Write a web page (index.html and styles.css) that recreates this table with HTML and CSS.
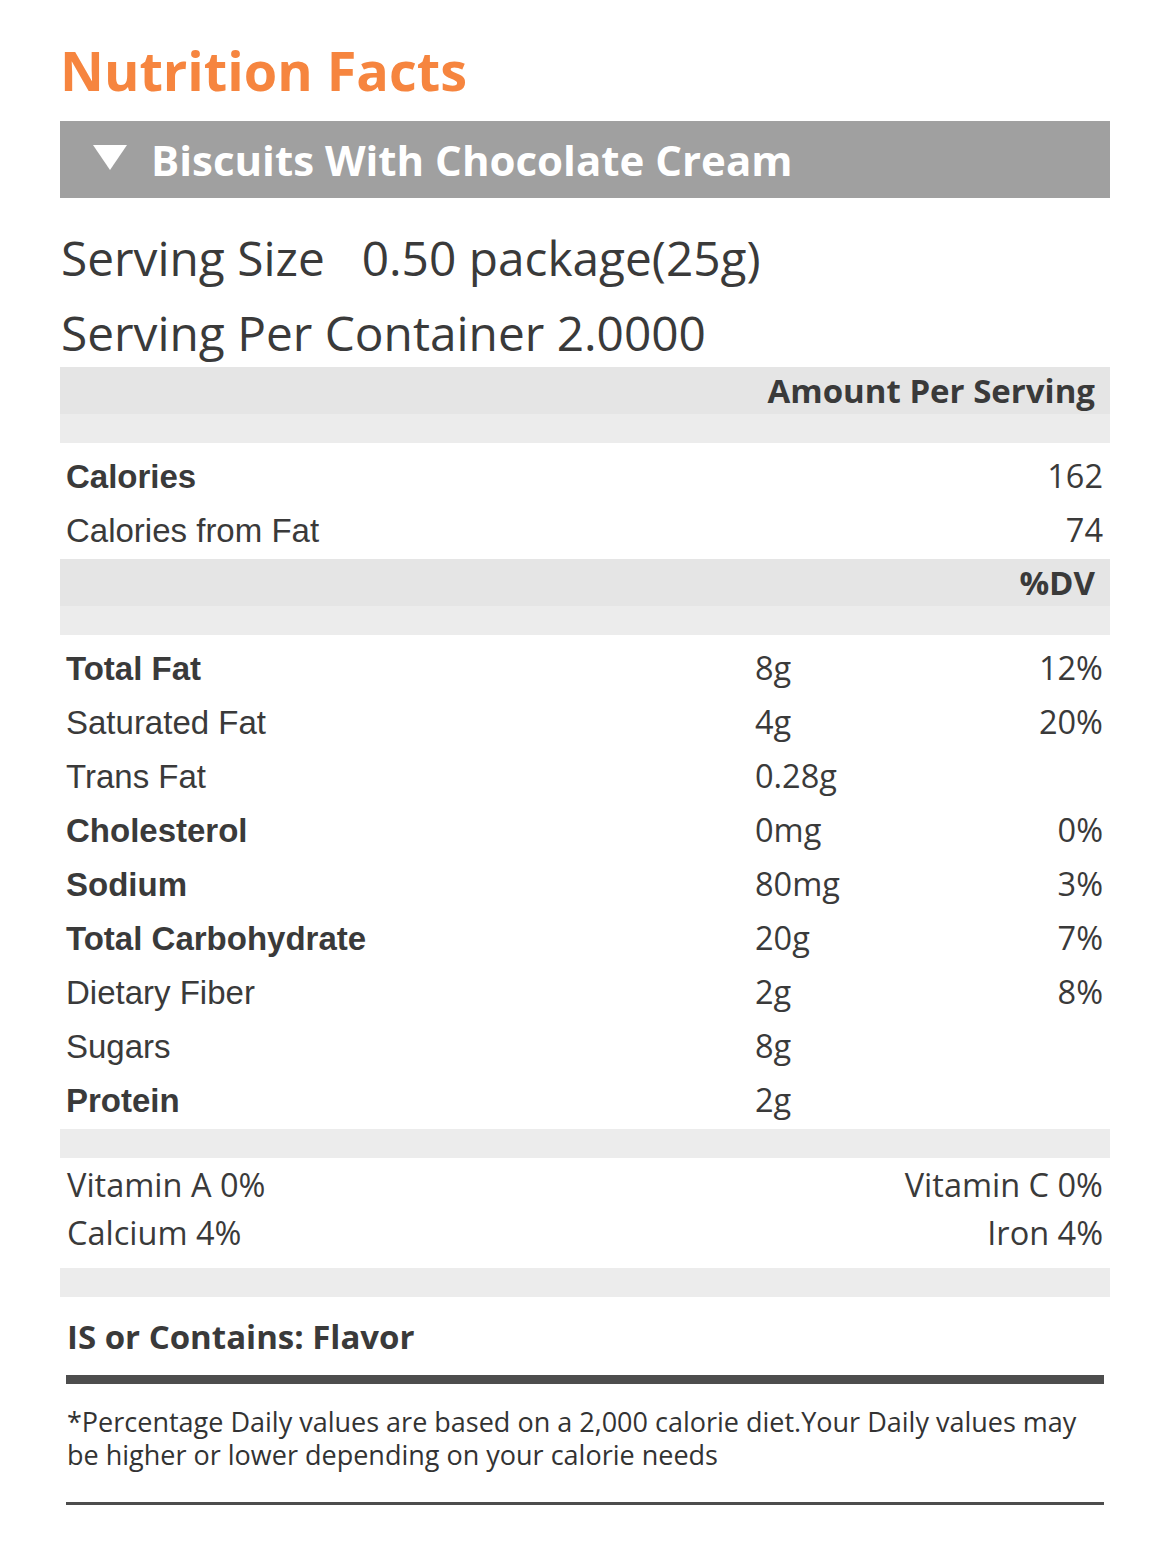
FILE: index.html
```html
<!DOCTYPE html>
<html>
<head>
<meta charset="utf-8">
<link rel="stylesheet" href="styles.css">
</head>
<body>
<div class="page">
  <h1 class="title">Nutrition Facts</h1>
  <div class="product-bar">
    <svg class="caret" width="34" height="25" viewBox="0 0 34 25"><polygon points="0,0 34,0 17,25" fill="#ffffff"/></svg>
    <span class="product-name">Biscuits With Chocolate Cream</span>
  </div>
  <div class="serving">
    <div class="serving-line">Serving Size<span class="serving-val">0.50 package(25g)</span></div>
    <div class="serving-line">Serving Per Container 2.0000</div>
  </div>

  <div class="band-head"><span>Amount Per Serving</span></div>
  <div class="band-spacer"></div>
  <div class="rows">
    <div class="row"><span class="lbl bold">Calories</span><span class="amt"></span><span class="dv">162</span></div>
    <div class="row"><span class="lbl">Calories from Fat</span><span class="amt"></span><span class="dv">74</span></div>
  </div>

  <div class="band-head"><span>%DV</span></div>
  <div class="band-spacer"></div>
  <div class="rows">
    <div class="row"><span class="lbl bold">Total Fat</span><span class="amt">8g</span><span class="dv">12%</span></div>
    <div class="row"><span class="lbl">Saturated Fat</span><span class="amt">4g</span><span class="dv">20%</span></div>
    <div class="row"><span class="lbl">Trans Fat</span><span class="amt">0.28g</span><span class="dv"></span></div>
    <div class="row"><span class="lbl bold">Cholesterol</span><span class="amt">0mg</span><span class="dv">0%</span></div>
    <div class="row"><span class="lbl bold">Sodium</span><span class="amt">80mg</span><span class="dv">3%</span></div>
    <div class="row"><span class="lbl bold">Total Carbohydrate</span><span class="amt">20g</span><span class="dv">7%</span></div>
    <div class="row"><span class="lbl">Dietary Fiber</span><span class="amt">2g</span><span class="dv">8%</span></div>
    <div class="row"><span class="lbl">Sugars</span><span class="amt">8g</span><span class="dv"></span></div>
    <div class="row"><span class="lbl bold">Protein</span><span class="amt">2g</span><span class="dv"></span></div>
  </div>

  <div class="band-spacer"></div>
  <div class="vitamins">
    <div class="vit-row"><span>Vitamin A 0%</span><span>Vitamin C 0%</span></div>
    <div class="vit-row"><span>Calcium 4%</span><span>Iron 4%</span></div>
  </div>
  <div class="band-spacer"></div>

  <div class="contains">IS or Contains: Flavor</div>
  <div class="rule-thick"></div>
  <p class="footnote">*Percentage Daily values are based on a 2,000 calorie diet.Your Daily values may be higher or lower depending on your calorie needs</p>
  <div class="rule-thin"></div>
</div>
</body>
</html>
```

FILE: styles.css
```css
html, body {
  margin: 0;
  padding: 0;
  background: #ffffff;
}

.page {
  width: 1050px;
  margin-left: 60px;
  color: #3a3a3a;
  font-family: "Open Sans", "Liberation Sans", sans-serif;
}

.title {
  margin: 0;
  padding-top: 34px;
  height: 121px;
  box-sizing: border-box;
  font-size: 54px;
  line-height: 72px;
  font-weight: 700;
  color: #f6853f;
  padding-left: 0;
}

.product-bar {
  height: 77px;
  background: #a0a0a0;
  display: flex;
  align-items: center;
  padding-left: 33px;
}

.caret {
  display: block;
  margin-top: -4px;
}

.product-name {
  margin-left: 24px;
  font-size: 42px;
  font-weight: 700;
  color: #ffffff;
  line-height: 1;
}

.serving {
  padding-top: 22px;
  padding-left: 1px;
}

.serving-line {
  font-size: 47.8px;
  line-height: 75px;
  height: 75px;
}

.serving-line:last-child {
  height: 72px;
}

.serving-val {
  margin-left: 37px;
}

.band-head {
  height: 47px;
  background: #e5e5e5;
  display: flex;
  justify-content: flex-end;
  align-items: center;
  padding-right: 15px;
  font-size: 33px;
  font-weight: 700;
}

.band-spacer {
  height: 29px;
  background: #ececec;
}

.rows {
  padding: 6px 7px 2px 6px;
}

.row {
  display: grid;
  grid-template-columns: 689px 1fr auto;
  height: 54px;
  line-height: 54px;
  align-items: baseline;
}

.lbl {
  font-family: "Liberation Sans", Arial, sans-serif;
  font-size: 33px;
}

.lbl.bold {
  font-weight: 700;
}

.amt, .dv {
  font-size: 32.5px;
}

.dv {
  text-align: right;
}

.vitamins {
  padding: 3px 7px 11px 7px;
}

.vit-row {
  display: flex;
  justify-content: space-between;
  font-size: 32.5px;
  line-height: 48px;
  height: 48px;
}

.contains {
  padding: 20px 7px 0 7px;
  font-size: 33px;
  font-weight: 700;
  line-height: 40px;
}

.rule-thick {
  margin: 18px 6px 0 6px;
  height: 9px;
  background: #4d4d4d;
}

.footnote {
  margin: 0;
  padding: 21px 7px 0 7px;
  font-size: 27px;
  line-height: 33px;
  color: #333333;
}

.rule-thin {
  margin: 31px 6px 0 6px;
  height: 3px;
  background: #4d4d4d;
}
```
